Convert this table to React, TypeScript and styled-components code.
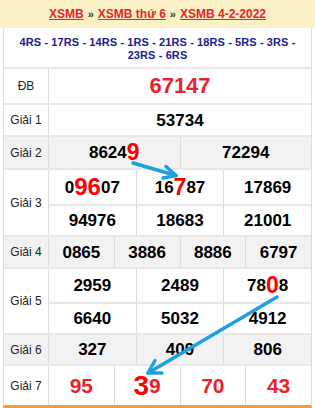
import styled, { createGlobalStyle } from "styled-components";

const GlobalStyle = createGlobalStyle`
  * { box-sizing: border-box; }
  body {
    margin: 0;
    background: #fff;
    font-family: "Liberation Sans", Arial, sans-serif;
  }
`;

type Num = { text: string; hi?: [number, number]; size?: number };

type Prize = {
  label: string;
  cols: number;
  rows: number[];
  gray?: boolean;
  kind?: "db" | "g7";
  nums: Num[];
};

const prizes: Prize[] = [
  { label: "ĐB", cols: 1, rows: [34], kind: "db", nums: [{ text: "67147" }] },
  { label: "Giải 1", cols: 1, rows: [30], nums: [{ text: "53734" }] },
  {
    label: "Giải 2",
    cols: 2,
    rows: [31],
    gray: true,
    nums: [{ text: "86249", hi: [4, 5], size: 23 }, { text: "72294" }],
  },
  {
    label: "Giải 3",
    cols: 3,
    rows: [34, 31],
    nums: [
      { text: "09607", hi: [1, 3], size: 24 },
      { text: "16787", hi: [2, 3], size: 23 },
      { text: "17869" },
      { text: "94976" },
      { text: "18683" },
      { text: "21001" },
    ],
  },
  {
    label: "Giải 4",
    cols: 4,
    rows: [30],
    gray: true,
    nums: [{ text: "0865" }, { text: "3886" }, { text: "8886" }, { text: "6797" }],
  },
  {
    label: "Giải 5",
    cols: 3,
    rows: [33, 31],
    nums: [
      { text: "2959" },
      { text: "2489" },
      { text: "7808", hi: [2, 3], size: 23 },
      { text: "6640" },
      { text: "5032" },
      { text: "4912" },
    ],
  },
  {
    label: "Giải 6",
    cols: 3,
    rows: [29],
    gray: true,
    nums: [{ text: "327" }, { text: "409" }, { text: "806" }],
  },
  {
    label: "Giải 7",
    cols: 4,
    rows: [39],
    kind: "g7",
    nums: [{ text: "95" }, { text: "39", hi: [0, 1], size: 28 }, { text: "70" }, { text: "43" }],
  },
];

const renderNum = (n: Num) => {
  if (!n.hi) return n.text;
  const [a, b] = n.hi;
  return (
    <>
      {n.text.slice(0, a)}
      <Hi $size={n.size ?? 23}>{n.text.slice(a, b)}</Hi>
      {n.text.slice(b)}
    </>
  );
};

const App = () => {
  return (
    <Page>
      <GlobalStyle />
      <Header>
        <HeadLink>XSMB</HeadLink>
        <Sep>»</Sep>
        <HeadLink>XSMB thứ 6</HeadLink>
        <Sep>»</Sep>
        <HeadLink>XSMB 4-2-2022</HeadLink>
      </Header>
      <Board>
        <Codes>4RS - 17RS - 14RS - 1RS - 21RS - 18RS - 5RS - 3RS - 23RS - 6RS</Codes>
        {prizes.map((p) => (
          <Row key={p.label} $gray={p.gray}>
            <Label>{p.label}</Label>
            <Cells $cols={p.cols} $rows={p.rows}>
              {p.nums.map((n, i) => (
                <Cell key={i} $kind={p.kind} $sub={i >= p.cols}>
                  {renderNum(n)}
                </Cell>
              ))}
            </Cells>
          </Row>
        ))}
      </Board>
      <Arrows width="315" height="408" viewBox="0 0 315 408">
        <g stroke="#1d9fe1" strokeWidth="3.5" strokeLinecap="round" fill="none">
          <path d="M133 163 L176 175.5" />
          <path d="M176 175.5 L163 178 M176 175.5 L166 166.5" />
          <path d="M277 297 L148 373" />
          <path d="M148 373 L155 360.5 M148 373 L162 373" />
        </g>
      </Arrows>
    </Page>
  );
};

export default App;

const Page = styled.div`
  position: relative;
  width: 315px;
  height: 408px;
  overflow: hidden;
`;

const Header = styled.div`
  height: 28px;
  background: #fcf0c7;
  display: flex;
  align-items: center;
  justify-content: center;
  gap: 4px;
  font-size: 12px;
  font-weight: 700;
`;

const HeadLink = styled.a`
  color: #e5242b;
  text-decoration: underline;
`;

const Sep = styled.span`
  color: #333;
  font-size: 11px;
`;

const Board = styled.div`
  margin: 0 3px;
  border-left: 1px solid #ddd;
  border-right: 1px solid #ddd;
  border-bottom: 3px solid #f59b38;
`;

const Codes = styled.div`
  height: 39px;
  padding: 8px 6px 0;
  text-align: center;
  color: #1c1c8e;
  font-size: 11px;
  font-weight: 700;
  letter-spacing: 0.1px;
  line-height: 13px;
`;

const Row = styled.div<{ $gray?: boolean }>`
  display: flex;
  border-top: 2px solid #e8e8e8;
  background: ${(p) => (p.$gray ? "#f2f2f2" : "#fff")};
`;

const Label = styled.div`
  width: 44px;
  flex: none;
  display: flex;
  align-items: center;
  justify-content: center;
  font-size: 12px;
  color: #222;
`;

const Cells = styled.div<{ $cols: number; $rows: number[] }>`
  flex: 1;
  display: grid;
  grid-template-columns: repeat(${(p) => p.$cols}, 1fr);
  grid-template-rows: ${(p) => p.$rows.map((r) => `${r}px`).join(" ")};
`;

const Cell = styled.div<{ $kind?: "db" | "g7"; $sub?: boolean }>`
  display: flex;
  align-items: center;
  justify-content: center;
  border-left: 1px solid #ddd;
  border-top: ${(p) => (p.$sub ? "2px solid #e8e8e8" : "none")};
  font-weight: 700;
  line-height: 1;
  font-size: ${(p) => (p.$kind === "db" ? "22px" : p.$kind === "g7" ? "21px" : "17px")};
  color: ${(p) => (p.$kind ? "#ec1f2c" : "#000")};
`;

const Hi = styled.span<{ $size: number }>`
  color: #ff0000;
  font-size: ${(p) => p.$size}px;
`;

const Arrows = styled.svg`
  position: absolute;
  left: 0;
  top: 0;
  pointer-events: none;
`;
